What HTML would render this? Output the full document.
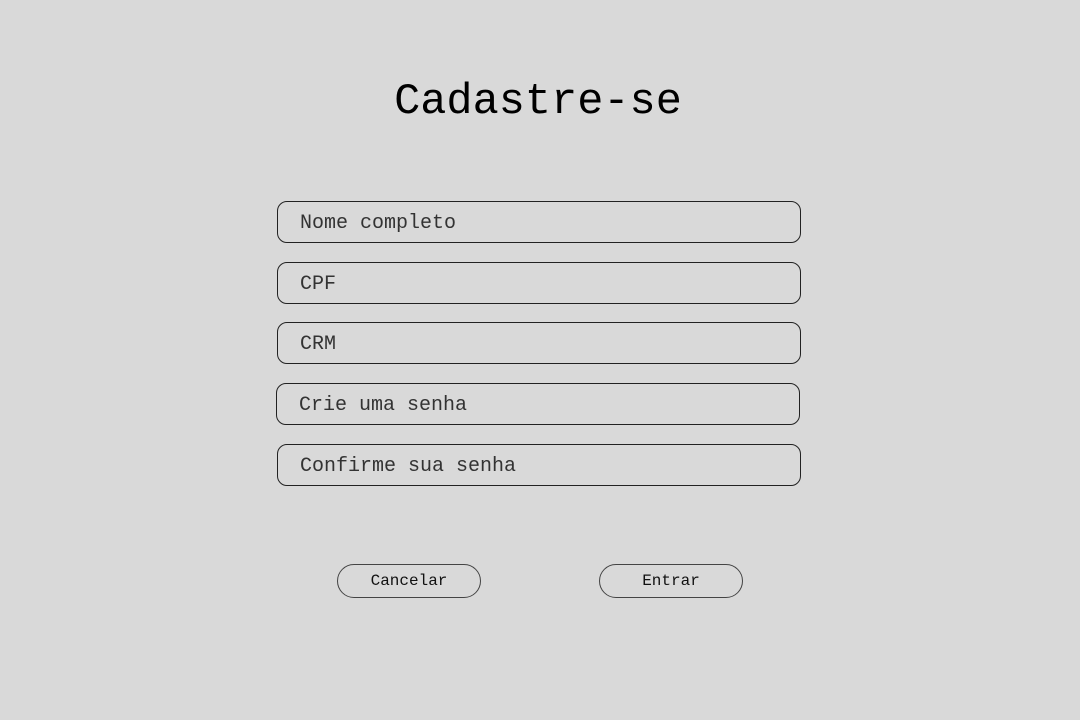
<!DOCTYPE html>
<html><head><style>
body{margin:0;width:1080px;height:720px;background:#d9d9d9;font-family:"Liberation Mono",monospace;position:relative;overflow:hidden;color:#111}
h1{position:absolute;left:-2px;width:1080px;top:76px;margin:0;text-align:center;font-weight:normal;font-size:43.6px;line-height:54px;color:#000}
.in{position:absolute;width:522px;height:40px;border:1px solid #222;border-radius:10px;box-sizing:content-box;font-size:20px;line-height:40px}
.in span{position:absolute;left:22px;top:2px;color:#333}
.b{position:absolute;top:564px;width:142px;height:32px;border:1px solid #444;border-radius:17px;text-align:center;font-size:16px;line-height:33px;color:#111}
</style></head><body>
<h1>Cadastre-se</h1>
<div class="in" style="left:277px;top:201px"><span>Nome completo</span></div>
<div class="in" style="left:277px;top:262px"><span>CPF</span></div>
<div class="in" style="left:277px;top:322px"><span>CRM</span></div>
<div class="in" style="left:276px;top:383px"><span>Crie uma senha</span></div>
<div class="in" style="left:277px;top:444px"><span>Confirme sua senha</span></div>
<div class="b" style="left:337px">Cancelar</div>
<div class="b" style="left:599px">Entrar</div>
</body></html>
